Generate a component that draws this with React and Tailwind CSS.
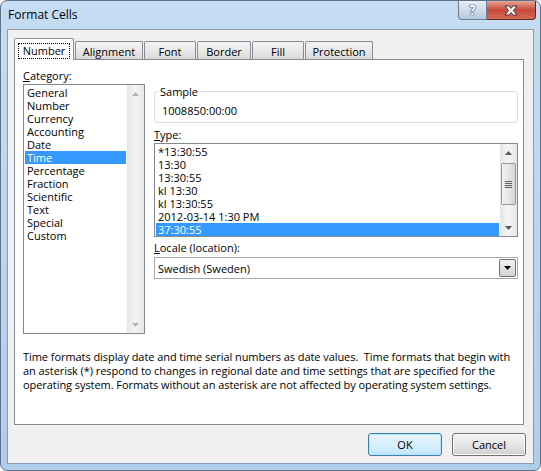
import React from "react";

const categories = [
  "General",
  "Number",
  "Currency",
  "Accounting",
  "Date",
  "Time",
  "Percentage",
  "Fraction",
  "Scientific",
  "Text",
  "Special",
  "Custom",
];

const types = [
  "*13:30:55",
  "13:30",
  "13:30:55",
  "kl 13:30",
  "kl 13:30:55",
  "2012-03-14 1:30 PM",
  "37:30:55",
];

const tabs = [
  { name: "Number", w: "w-[60px]" },
  { name: "Alignment", w: "w-[68px]" },
  { name: "Font", w: "w-[52px]" },
  { name: "Border", w: "w-[54px]" },
  { name: "Fill", w: "w-[52px]" },
  { name: "Protection", w: "w-[68px]" },
];

const Arrow = ({ down, color }) => (
  <svg width="7" height="4" viewBox="0 0 7 4">
    <path d={down ? "M0 0 L7 0 L3.5 4 Z" : "M3.5 0 L7 4 L0 4 Z"} fill={color} />
  </svg>
);

const ScrollBar = ({ disabled, children }) => {
  const c = disabled ? "#b4b4b4" : "#595959";
  return (
    <div className="w-[17px] h-full flex flex-col bg-gradient-to-r from-[#e6e6e6] via-[#f4f4f4] to-[#e6e6e6]">
      <div className="h-[17px] flex items-center justify-center">
        <Arrow color={c} />
      </div>
      <div className="flex-1">{children}</div>
      <div className="h-[17px] flex items-center justify-center">
        <Arrow down color={c} />
      </div>
    </div>
  );
};

const Thumb = () => (
  <div className="mt-[2px] mx-[1px] h-[42px] rounded-[2px] border border-[#979797] bg-gradient-to-r from-[#f3f3f3] via-[#e6e6e6] to-[#d6d6d6] flex flex-col items-center justify-center gap-[1px]">
    <div className="w-[7px] h-[1px] bg-[#5c5c5c]" />
    <div className="w-[7px] h-[1px] bg-[#5c5c5c]" />
    <div className="w-[7px] h-[1px] bg-[#5c5c5c]" />
    <div className="w-[7px] h-[1px] bg-[#5c5c5c]" />
  </div>
);

const ListItem = ({ text, selected }) => (
  <div
    className={
      "h-[13px] leading-[13px] mx-[1px] pl-[2px] whitespace-nowrap " +
      (selected ? "bg-[#3399ff] text-white" : "text-black")
    }
  >
    {text}
  </div>
);

const Button = ({ label, isDefault }) => (
  <button
    className={
      "w-[74px] h-[23px] rounded-[3px] border text-black leading-[13px] " +
      (isDefault
        ? "border-[#3c7fb1] bg-gradient-to-b from-[#eaf6fd] via-[#d9effc] to-[#bee6fd] shadow-[inset_0_0_0_1px_#b8e4f8]"
        : "border-[#707070] bg-gradient-to-b from-[#f2f2f2] via-[#e6e6e6] to-[#d0d0d0] shadow-[inset_0_0_0_1px_#fbfbfb]")
    }
  >
    {label}
  </button>
);

export default function App() {
  return (
    <div className="w-[541px] h-[471px] font-['Open_Sans',sans-serif] text-[11px] text-black">
      <div className="w-full h-full rounded-[7px] border border-[#5d7189] bg-gradient-to-b from-[#c6dcf2] via-[#bcd5ef] to-[#b0cdec] flex flex-col">
        {/* title bar */}
        <div className="h-[28px] flex items-start justify-between">
          <div className="pl-[7px] pt-[6px] text-[12px] leading-[16px]">Format Cells</div>
          <div className="flex mr-[4px]">
            <div className="w-[29px] h-[19px] rounded-bl-[4px] border border-t-0 border-[#6b7d92] bg-gradient-to-b from-[#e6eef6] via-[#cfdceb] to-[#b5c9de] flex items-center justify-center">
              <span className="text-[14px] font-bold leading-none text-white [text-shadow:0_0_1px_#2b3c50,0_0_1px_#2b3c50,0_0_1px_#2b3c50]">
                ?
              </span>
            </div>
            <div className="w-[49px] h-[19px] rounded-br-[4px] border border-t-0 border-l-0 border-[#5e2a22] bg-gradient-to-b from-[#e6a798] via-[#c8473a] to-[#d46a57] flex items-center justify-center">
              <svg width="14" height="11" viewBox="0 0 14 11">
                <path
                  d="M1 1 H5 L7 3.5 L9 1 H13 L9.3 5.5 L13 10 H9 L7 7.5 L5 10 H1 L4.7 5.5 Z"
                  fill="#ffffff"
                  stroke="#3b2420"
                  strokeWidth="0.9"
                  strokeLinejoin="round"
                />
              </svg>
            </div>
          </div>
        </div>

        {/* client area */}
        <div className="mx-[6px] h-[435px] border border-[#8a9bae] bg-[#f0f0f0] flex flex-col">
          <div className="pt-[8px] pl-[6px]">
            {/* tabs */}
            <div className="flex items-end h-[21px]">
              {tabs.map((t, i) =>
                i === 0 ? (
                  <div
                    key={t.name}
                    className={
                      t.w +
                      " h-[22px] -mb-[1px] relative z-10 bg-white border border-b-0 border-[#898c95] rounded-t-[2px] flex justify-center pt-[4px]"
                    }
                  >
                    <span className="h-[16px] leading-[14px] px-[4px] border border-dotted border-black">
                      {t.name}
                    </span>
                  </div>
                ) : (
                  <div
                    key={t.name}
                    className={
                      t.w +
                      " ml-[1px] h-[18px] border border-b-0 border-[#898c95] rounded-t-[2px] bg-gradient-to-b from-[#f3f3f3] via-[#e9e9e9] to-[#d9d9d9] flex items-center justify-center pt-[2px] leading-[13px]"
                    }
                  >
                    {t.name}
                  </div>
                )
              )}
            </div>

            {/* panel */}
            <div className="w-[510px] h-[366px] bg-white border border-[#898c95] pt-[9px] pl-[8px]">
              <div className="flex">
                {/* left column */}
                <div className="w-[122px]">
                  <div className="h-[13px] leading-[13px]">
                    <u>C</u>ategory:
                  </div>
                  <div className="mt-[2px] h-[250px] border border-[#828790] flex">
                    <div className="flex-1 pt-[1px]">
                      {categories.map((c) => (
                        <ListItem key={c} text={c} selected={c === "Time"} />
                      ))}
                    </div>
                    <ScrollBar disabled />
                  </div>
                </div>

                {/* right column */}
                <div className="w-[364px] ml-[9px]">
                  <div className="mt-[22px] relative h-[32px] border border-[#d5dfe5] rounded-[3px] pt-[12px] pl-[7px]">
                    <div className="absolute left-[4px] -top-[7px] bg-white px-[1px] h-[13px] leading-[13px]">
                      Sample
                    </div>
                    <div className="h-[13px] leading-[13px]">1008850:00:00</div>
                  </div>
                  <div className="mt-[5px] h-[13px] leading-[13px]">
                    <u>T</u>ype:
                  </div>
                  <div className="mt-[2px] h-[94px] border border-[#828790] flex">
                    <div className="flex-1 pt-[1px]">
                      {types.map((t) => (
                        <ListItem key={t} text={t} selected={t === "37:30:55"} />
                      ))}
                    </div>
                    <ScrollBar>
                      <Thumb />
                    </ScrollBar>
                  </div>
                  <div className="mt-[4px] h-[13px] leading-[13px]">
                    <u>L</u>ocale (location):
                  </div>
                  <div className="mt-[3px] h-[22px] border border-[#a5a8ae] flex items-center justify-between pl-[3px] pr-[1px]">
                    <span className="leading-[13px]">Swedish (Sweden)</span>
                    <div className="w-[17px] h-[18px] border border-[#707070] rounded-[2px] bg-gradient-to-b from-[#f2f2f2] via-[#e4e4e4] to-[#d2d2d2] flex items-center justify-center">
                      <Arrow down color="#000000" />
                    </div>
                  </div>
                </div>
              </div>

              {/* description */}
              <div className="mt-[16px] leading-[14px] whitespace-nowrap tracking-[-0.06px]">
                Time formats display date and time serial numbers as date values.&nbsp; Time formats that begin with
                <br />
                an asterisk (*) respond to changes in regional date and time settings that are specified for the
                <br />
                operating system. Formats without an asterisk are not affected by operating system settings.
              </div>
            </div>

            {/* buttons */}
            <div className="mt-[8px] flex justify-end gap-[10px] pr-[7px]">
              <Button label="OK" isDefault />
              <Button label="Cancel" />
            </div>
          </div>
        </div>
      </div>
    </div>
  );
}
